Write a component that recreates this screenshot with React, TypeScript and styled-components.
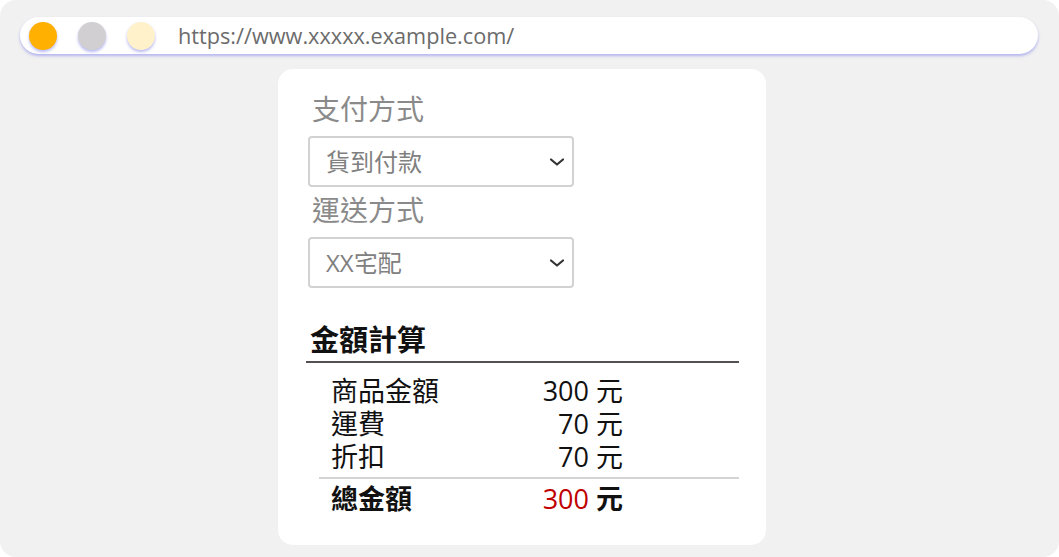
import React from "react";
import styled, { createGlobalStyle } from "styled-components";

const Global = createGlobalStyle`
  html, body { margin: 0; padding: 0; background: #ffffff; }
  body { font-family: "Open Sans", "Noto Sans CJK TC", sans-serif; }
  * { box-sizing: border-box; }
`;

const Frame = styled.div`
  width: 1059px;
  height: 557px;
  background: #f1f1f1;
  border-radius: 16px;
  padding: 17px 21px 0 20px;
  display: flex;
  flex-direction: column;
  overflow: hidden;
`;

const UrlBar = styled.div`
  height: 37px;
  background: #ffffff;
  border-radius: 19px;
  box-shadow: 0 2px 3px rgba(130, 130, 235, 0.55);
  display: flex;
  align-items: center;
  padding-left: 9px;
`;

const Dot = styled.span<{ $color: string }>`
  width: 28px;
  height: 28px;
  border-radius: 50%;
  background: ${(p) => p.$color};
  box-shadow: 0 2px 3px rgba(130, 130, 235, 0.55);
  margin-right: 21px;
  flex: none;
`;

const Url = styled.span`
  font-family: "Open Sans", sans-serif;
  font-size: 21.7px;
  color: #6b6b6b;
  margin-left: 2px;
`;

const Card = styled.div`
  align-self: flex-start;
  margin: 15px 0 0 258px;
  width: 488px;
  height: 476px;
  background: #ffffff;
  border-radius: 15px;
  padding: 17px 27px 0 28px;
  display: flex;
  flex-direction: column;
`;

const FieldLabel = styled.div`
  height: 50px;
  line-height: 45px;
  font-family: "Noto Sans CJK TC", sans-serif;
  font-size: 28px;
  color: #8a8a8a;
  padding-left: 6px;
`;

const Select = styled.div`
  margin-left: 2px;
  width: 266px;
  height: 51px;
  border: 2px solid #d2d2d2;
  border-radius: 4px;
  display: flex;
  align-items: center;
  justify-content: space-between;
  padding: 0 7px 3px 16px;
`;

const SelectText = styled.span`
  font-family: "Open Sans", "Noto Sans CJK TC", sans-serif;
  font-size: 24px;
  color: #808080;
`;

const Chevron = () => (
  <svg width="16" height="10" viewBox="0 0 16 10" style={{ marginTop: 3 }}>
    <path d="M2 2.5 L8 7.5 L14 2.5" fill="none" stroke="#333" strokeWidth="2.2" strokeLinecap="round" strokeLinejoin="round" />
  </svg>
);

const Heading = styled.div`
  margin-top: 33px;
  height: 42px;
  line-height: 34px;
  font-family: "Noto Sans CJK TC", sans-serif;
  font-weight: 700;
  font-size: 29px;
  color: #111;
  padding-left: 4px;
  border-bottom: 2px solid #555151;
`;

const Summary = styled.div`
  margin: 10px 0 0 13px;
  display: flex;
  flex-direction: column;
`;

const Row = styled.div<{ $total?: boolean }>`
  display: grid;
  grid-template-columns: 190px 102px;
  height: 33px;
  line-height: 33px;
  padding-left: 12px;
  font-family: "Open Sans", "Noto Sans CJK TC", sans-serif;
  font-size: 27px;
  color: #111;
  font-weight: ${(p) => (p.$total ? 700 : 400)};
`;

const RowLabel = styled.span`
  font-family: "Noto Sans CJK TC", sans-serif;
`;

const Value = styled.span`
  text-align: right;
  white-space: pre;
`;

const Num = styled.span<{ $red?: boolean }>`
  color: ${(p) => (p.$red ? "#c00000" : "inherit")};
  font-weight: 400;
`;

const Unit = styled.span<{ $bold?: boolean }>`
  font-family: "Noto Sans CJK TC", sans-serif;
  font-weight: ${(p) => (p.$bold ? 700 : 400)};
`;

const Divider = styled.div`
  height: 2px;
  background: #d4d4d4;
  margin: 5px 0 2px;
`;

const rows = [
  { label: "商品金額", value: "300" },
  { label: "運費", value: "70" },
  { label: "折扣", value: "70" },
];

export default function App() {
  return (
    <>
      <Global />
      <Frame>
        <UrlBar>
          <Dot $color="#ffb000" />
          <Dot $color="#d1cfd1" />
          <Dot $color="#fff2cb" />
          <Url>https://www.xxxxx.example.com/</Url>
        </UrlBar>
        <Card>
          <FieldLabel>支付方式</FieldLabel>
          <Select>
            <SelectText>貨到付款</SelectText>
            <Chevron />
          </Select>
          <FieldLabel>運送方式</FieldLabel>
          <Select>
            <SelectText>XX宅配</SelectText>
            <Chevron />
          </Select>
          <Heading>金額計算</Heading>
          <Summary>
            {rows.map((r) => (
              <Row key={r.label}>
                <RowLabel>{r.label}</RowLabel>
                <Value>
                  <Num>{r.value}</Num> <Unit>元</Unit>
                </Value>
              </Row>
            ))}
            <Divider />
            <Row $total>
              <RowLabel>總金額</RowLabel>
              <Value>
                <Num $red>300</Num> <Unit $bold>元</Unit>
              </Value>
            </Row>
          </Summary>
        </Card>
      </Frame>
    </>
  );
}
